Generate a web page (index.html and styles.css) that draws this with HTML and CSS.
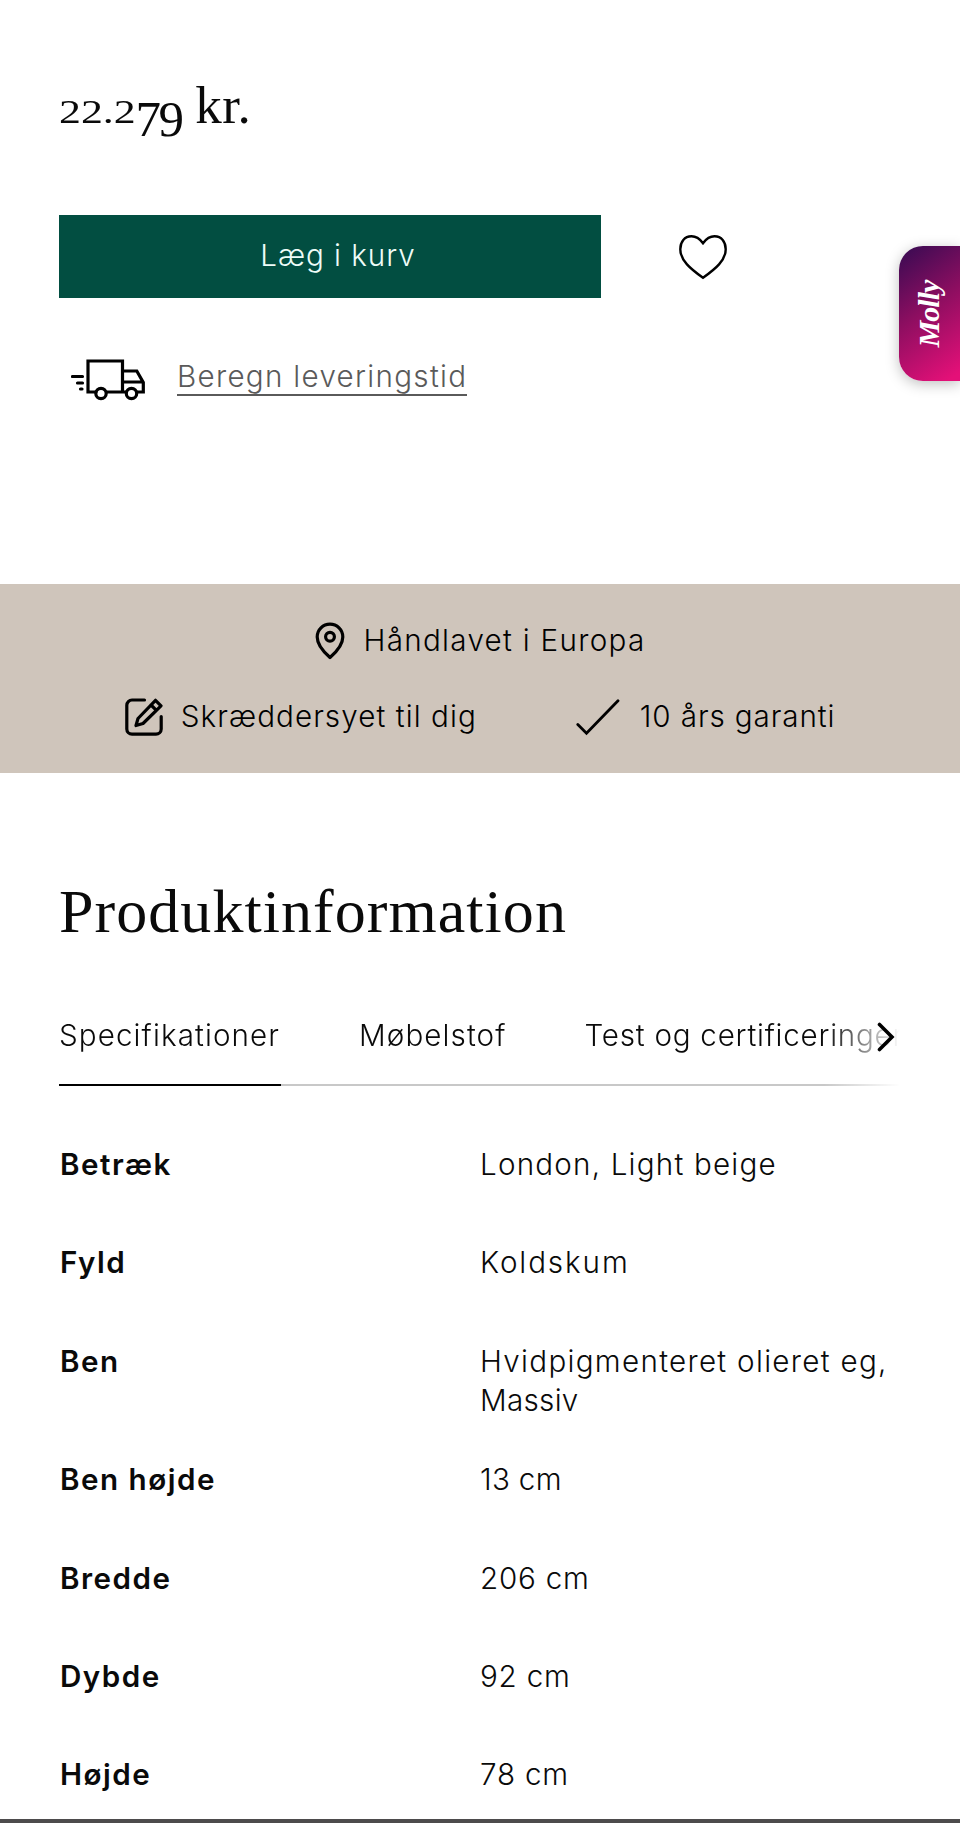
FILE: index.html
```html
<!DOCTYPE html>
<html lang="da">
<head>
<meta charset="utf-8">
<title>Produktinformation</title>
<link rel="stylesheet" href="styles.css">
</head>
<body>
<main class="page">
  <section class="purchase">
    <p class="price"><span class="digit-low">22.2</span><span class="digit-drop">79</span> kr.</p>
    <div class="buy-row">
      <button class="buy-button" type="button">Læg i kurv</button>
      <svg class="heart" viewBox="0 0 50 46" fill="none" stroke="#000" stroke-width="2.4">
        <path d="M25 9.2C21.5 4.5 18 2.3 13.5 2.3C6.5 2.3 2.3 8 2.3 15.2C2.3 26.5 12.5 34.8 25 43.8C37.5 34.8 47.7 26.5 47.7 15.2C47.7 8 43.5 2.3 36.5 2.3C32 2.3 28.5 4.5 25 9.2Z"/>
      </svg>
    </div>
    <div class="delivery">
      <svg class="truck" viewBox="11 19 75 42" fill="none" stroke="#000" stroke-width="3.200" stroke-linecap="round">
        <path d="M36 52H28V21H62.5V52H47M62.5 31H76.8L83.3 42.5V52H77M62.5 42H83M62.5 52H66.5M12.500 36.500H22.500M17.500 43H22.500M20.500 49H22"/>
        <circle cx="41" cy="53.500" r="5.200"/>
        <circle cx="71.500" cy="53.500" r="5.200"/>
      </svg>
      <a class="delivery-link">Beregn leveringstid</a>
    </div>
  </section>

  <section class="usps">
    <div class="usp-line">
      <div class="usp">
        <svg class="pin" viewBox="0 0 30 38" fill="none" stroke="#000" stroke-width="3.200" stroke-linejoin="round">
          <path d="M15 35.500C11 32 2.200 24.500 2.200 15A12.800 12.800 0 0 1 27.800 15C27.800 24.500 19 32 15 35.500Z"/>
          <circle cx="15" cy="14.800" r="4.400"/>
        </svg>
        <span class="text-europe">Håndlavet i Europa</span>
      </div>
    </div>
    <div class="usp-line">
      <div class="usp">
        <svg class="edit" viewBox="0 0 38 38" fill="none" stroke="#000" stroke-width="3.200" stroke-linecap="round" stroke-linejoin="round">
          <path d="M19.500 2H7A5.200 5.200 0 0 0 1.800 7.200V31A5.200 5.200 0 0 0 7 36.200H31A5.200 5.200 0 0 0 36.200 31V18.500"/>
          <path d="M30.500 2.300L36 7.800L18 25.500L11 27.500L13 20.500ZM26 7L31.200 12.200"/>
        </svg>
        <span class="text-tailored">Skræddersyet til dig</span>
      </div>
      <div class="usp">
        <svg class="check" viewBox="0 0 44 38" fill="none" stroke="#000" stroke-width="2.800" stroke-linecap="round">
          <path d="M1.800 26.500L10.500 35.200L42 2.700"/>
        </svg>
        <span class="text-warranty">10 års garanti</span>
      </div>
    </div>
  </section>

  <section class="info">
    <h2 class="info-title">Produktinformation</h2>
    <div class="tabs-wrap">
      <div class="tabs">
        <span class="tab tab-active">Specifikationer</span>
        <span class="tab">Møbelstof</span>
        <span class="tab tab-tests">Test og certificeringer</span>
      </div>
      <svg class="chevron" viewBox="0 0 18 30" fill="none" stroke="#000" stroke-width="3.600" stroke-linecap="round">
        <path d="M2.500 2.500L15 15L2.500 27.500"/>
      </svg>
    </div>
    <dl class="specs">
      <div class="spec"><dt>Betræk</dt><dd>London, Light beige</dd></div>
      <div class="spec"><dt>Fyld</dt><dd class="wide">Koldskum</dd></div>
      <div class="spec"><dt>Ben</dt><dd class="mid">Hvidpigmenteret olieret eg, <span class="tight">Massiv</span></dd></div>
      <div class="spec"><dt>Ben højde</dt><dd class="tight">13 cm</dd></div>
      <div class="spec"><dt>Bredde</dt><dd class="num">206 cm</dd></div>
      <div class="spec"><dt>Dybde</dt><dd class="num">92 cm</dd></div>
      <div class="spec"><dt>Højde</dt><dd class="num">78 cm</dd></div>
    </dl>
  </section>
  <aside class="molly"><span class="molly-name">Molly</span></aside>
  <div class="bottom-bar"></div>
</main>
</body>
</html>
```
FILE: styles.css
```css
* { box-sizing: border-box; }
body {
  margin: 0;
  background: #fff;
  color: #0a0a0a;
  font: 360 29.6px/39.5px Inter, "Liberation Sans", sans-serif;
  letter-spacing: 1.1px;
}
p, h2, dl, dd { margin: 0; }
svg { display: block; flex: none; }

.page {
  position: relative;
  display: flex;
  flex-direction: column;
  height: 1823px;
  overflow: hidden;
}

.purchase { height: 584px; padding: 73px 59px 0; }
.price {
  height: 142px;
  font: 400 53px/64px "Liberation Serif", serif;
  letter-spacing: 0.5px;
  white-space: pre;
}
.digit-low {
  display: inline-block;
  margin-right: 17px;
  font-size: 34px;
  line-height: 1;
  letter-spacing: 0;
  transform: scaleX(1.29);
  transform-origin: left;
}
.digit-drop { font-size: 51px; letter-spacing: -2.5px; line-height: 0; vertical-align: -13px; }

.buy-row { display: flex; align-items: center; gap: 77px; }
.buy-button {
  width: 542px;
  height: 83px;
  padding: 0 0 2px 16px;
  border: 0;
  background: #024e41;
  color: #eefcf8;
  font: inherit;
  letter-spacing: 0.95px;
}
.heart { width: 50px; height: 46px; }

.delivery { display: flex; margin-top: 59px; padding-left: 12px; }
.truck { width: 75px; height: 42px; margin-top: 2px; }
.delivery-link {
  height: 39px;
  margin-left: 31px;
  border-bottom: 2px solid #5a5a5a;
  color: #5a5a5a;
  line-height: 39px;
  letter-spacing: 1.3px;
}

.usps {
  display: flex;
  flex-direction: column;
  gap: 36px;
  height: 189px;
  padding-top: 37px;
  background: #cfc5bb;
  color: #000;
}
.usp-line { display: flex; justify-content: center; gap: 99px; }
.usp { display: flex; align-items: center; height: 40px; white-space: nowrap; }
.pin { width: 30px; height: 38px; margin-right: 19px; }
.edit { width: 38px; height: 38px; margin-right: 18px; }
.check { width: 44px; height: 38px; margin-right: 20px; }
.text-europe { letter-spacing: 1.3px; }
.text-tailored { letter-spacing: 1.08px; }
.text-warranty { letter-spacing: 0.9px; }

.info { padding: 98px 59px 0; }
.info-title {
  font: 400 62px/80px "Liberation Serif", serif;
  letter-spacing: 1.05px;
}
.tabs-wrap { position: relative; width: 841px; margin-top: 65px; }
.tabs {
  display: flex;
  gap: 78px;
  height: 70px;
  background: linear-gradient(#c8c8c8, #c8c8c8) 0 100% / 100% 2px no-repeat;
  mask-image: linear-gradient(90deg, #000 91%, transparent 100%);
}
.tab { flex: none; height: 70px; white-space: nowrap; }
.tab-active { width: 222px; border-bottom: 2px solid #000; }
.tab-tests { letter-spacing: 0.75px; }
.chevron { position: absolute; left: 818px; top: 6px; width: 18px; height: 30px; }

.specs { display: flex; flex-direction: column; gap: 39.4px; margin-top: 59px; }
.spec {
  display: grid;
  grid-template-columns: 421px 1fr;
  min-height: 59px;
}
.spec dt { padding-left: 1px; font-weight: 600; letter-spacing: 1.5px; }
.spec dd { letter-spacing: 1.2px; }
.spec .wide { letter-spacing: 1.9px; }
.spec .mid { letter-spacing: 1.3px; }
.spec .num { letter-spacing: 0.8px; }
.spec .tight { letter-spacing: 0.3px; }

.molly {
  position: absolute;
  right: 0;
  top: 246px;
  display: flex;
  align-items: center;
  justify-content: center;
  width: 61px;
  height: 135px;
  border-radius: 24px 0 0 24px;
  background: linear-gradient(145deg, #3f0b54 5%, #8b0e60 45%, #e41078 95%);
  box-shadow: 0 3px 14px rgba(0, 0, 0, 0.25);
}
.molly-name {
  color: #fff;
  font: italic 700 30px/34px "Liberation Serif", cursive;
  letter-spacing: -1px;
  transform: rotate(-90deg);
}
.bottom-bar { position: absolute; left: 0; right: 0; bottom: 0; height: 4px; background: #4d4b4c; }
```
